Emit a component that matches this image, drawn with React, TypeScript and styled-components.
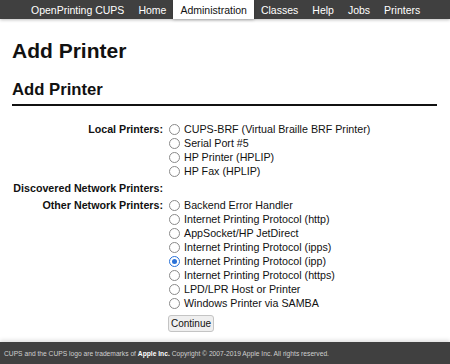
import styled, { createGlobalStyle } from "styled-components";

const GlobalStyle = createGlobalStyle`
  html, body {
    margin: 0;
    padding: 0;
    background: #fff;
  }
  body {
    font-family: "Liberation Sans", Arial, sans-serif;
    font-size: 10.7px;
    color: #111;
  }
`;

const navItems = [
  { name: "OpenPrinting CUPS" },
  { name: "Home" },
  { name: "Administration", active: true },
  { name: "Classes" },
  { name: "Help" },
  { name: "Jobs" },
  { name: "Printers" },
];

type Group = {
  label: string;
  options: { name: string; checked?: boolean }[];
};

const groups: Group[] = [
  {
    label: "Local Printers:",
    options: [
      { name: "CUPS-BRF (Virtual Braille BRF Printer)" },
      { name: "Serial Port #5" },
      { name: "HP Printer (HPLIP)" },
      { name: "HP Fax (HPLIP)" },
    ],
  },
  { label: "Discovered Network Printers:", options: [] },
  {
    label: "Other Network Printers:",
    options: [
      { name: "Backend Error Handler" },
      { name: "Internet Printing Protocol (http)" },
      { name: "AppSocket/HP JetDirect" },
      { name: "Internet Printing Protocol (ipps)" },
      { name: "Internet Printing Protocol (ipp)", checked: true },
      { name: "Internet Printing Protocol (https)" },
      { name: "LPD/LPR Host or Printer" },
      { name: "Windows Printer via SAMBA" },
    ],
  },
];

const App = () => {
  return (
    <Page>
      <GlobalStyle />
      <Header>
        {navItems.map((item) => (
          <NavItem key={item.name} $active={item.active}>
            {item.name}
          </NavItem>
        ))}
      </Header>
      <Main>
        <Title>Add Printer</Title>
        <SubTitle>Add Printer</SubTitle>
        <Form>
          {groups.map((group) => (
            <Row key={group.label}>
              <Label>{group.label}</Label>
              <Options>
                {group.options.map((opt) => (
                  <Option key={opt.name}>
                    <Radio $checked={opt.checked} />
                    {opt.name}
                  </Option>
                ))}
              </Options>
            </Row>
          ))}
          <Row>
            <span />
            <Button>Continue</Button>
          </Row>
        </Form>
      </Main>
      <Footer>
        <FooterText>
          CUPS and the CUPS logo are trademarks of <strong>Apple Inc.</strong>{" "}
          Copyright © 2007-2019 Apple Inc. All rights reserved.
        </FooterText>
      </Footer>
    </Page>
  );
};

const Page = styled.div`
  display: flex;
  flex-direction: column;
  min-height: 364px;
`;

const Header = styled.div`
  height: 19px;
  background: #404040;
  display: flex;
  flex-direction: row;
  align-items: stretch;
  padding-left: 24px;
  box-shadow: 0 1px 3px rgba(0, 0, 0, 0.25);
`;

const NavItem = styled.a<{ $active?: boolean }>`
  display: flex;
  align-items: center;
  padding: 0 7px;
  font-size: 10.5px;
  color: ${(p) => (p.$active ? "#111" : "#fff")};
  background: ${(p) => (p.$active ? "#fff" : "transparent")};
  box-shadow: ${(p) => (p.$active ? "0 1px 3px rgba(0,0,0,0.2)" : "none")};
  cursor: pointer;
`;

const Main = styled.div`
  flex: 1;
  padding: 0 13px 0 12px;
`;

const Title = styled.h1`
  margin: 20px 0 0;
  font-size: 21px;
  line-height: 24px;
  font-weight: 700;
`;

const SubTitle = styled.h2`
  margin: 17px 0 0;
  font-size: 16.7px;
  line-height: 20px;
  font-weight: 700;
  padding-bottom: 4px;
  border-bottom: 2px solid #111;
`;

const Form = styled.div`
  display: grid;
  grid-template-columns: 151px 1fr;
  column-gap: 5px;
  row-gap: 3px;
  margin-top: 16px;
`;

const Row = styled.div`
  display: contents;
`;

const Label = styled.div`
  text-align: right;
  font-weight: 700;
  line-height: 14px;
`;

const Options = styled.div`
  display: flex;
  flex-direction: column;
`;

const Option = styled.label`
  display: flex;
  align-items: center;
  gap: 4px;
  line-height: 14px;
  padding-left: 1px;
`;

const Radio = styled.span<{ $checked?: boolean }>`
  width: 9px;
  height: 9px;
  border-radius: 50%;
  border: 1px solid ${(p) => (p.$checked ? "#2a72d8" : "#8a8a8a")};
  display: flex;
  align-items: center;
  justify-content: center;
  background: #fff;

  &::after {
    content: "";
    width: 5px;
    height: 5px;
    border-radius: 50%;
    background: ${(p) => (p.$checked ? "#2a72d8" : "transparent")};
  }
`;

const Button = styled.button`
  justify-self: start;
  margin-top: 2px;
  padding: 2px 2px;
  font-family: "Liberation Sans", Arial, sans-serif;
  font-size: 10px;
  color: #111;
  background: #efefef;
  border: 1px solid #c4c4c4;
  border-radius: 3px;
`;

const Footer = styled.div`
  margin-top: 8px;
  height: 22px;
  background: #404040;
  display: flex;
  align-items: center;
  padding-left: 4px;
  box-shadow: 0 -2px 4px rgba(0, 0, 0, 0.12);
`;

const FooterText = styled.span`
  color: #cfcfcf;
  font-size: 6.7px;
  white-space: nowrap;

  strong {
    color: #fff;
    font-weight: 700;
  }
`;

export default App;
